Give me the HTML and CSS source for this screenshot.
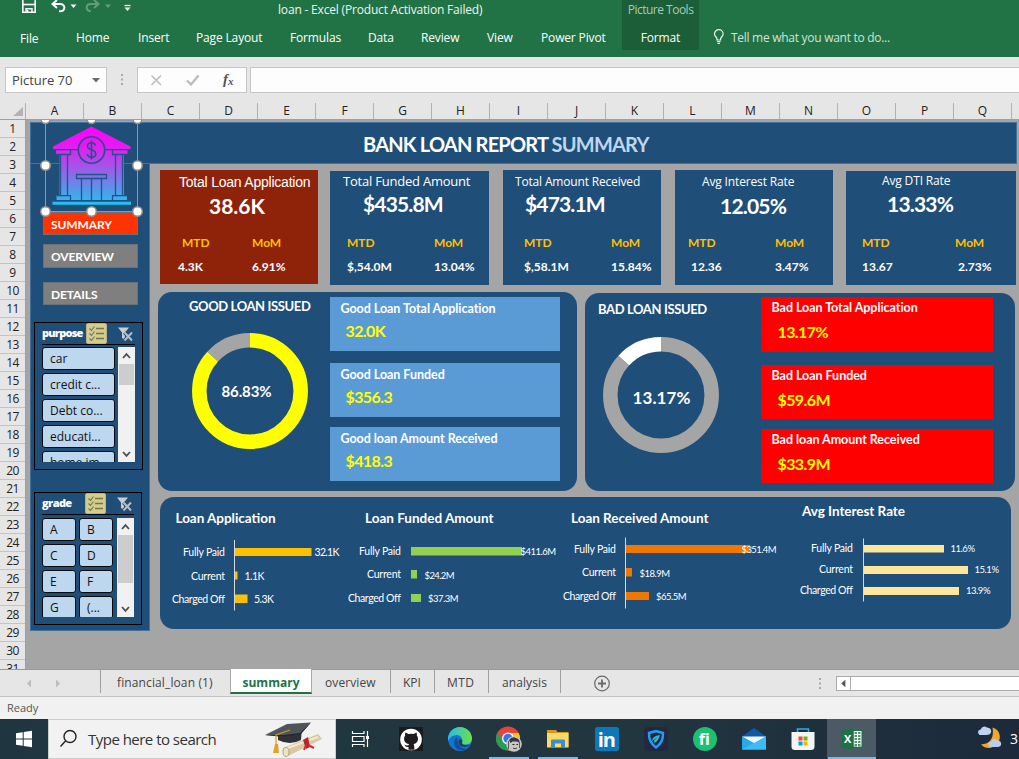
FILE: index.html
```html
<!DOCTYPE html>
<html lang="en">
<head>
<meta charset="utf-8">
<title>loan - Excel</title>
<link rel="stylesheet" href="styles.css">
</head>
<body>
<div class="app">
  <header class="ribbon">
    <div class="title-row">
      <svg class="quick" width="140" height="19" viewBox="0 0 140 19" fill="none" stroke="#fff">
        <path d="M22.8 0V12.2H35.2V0" stroke-width="1.6"/><path d="M23 4.5H35" stroke-width="1.6"/><path d="M26 12.5V8.7H32V12.5" stroke-width="1.4"/><path d="M27.5 10V12.5" stroke-width="1.6"/>
        <path d="M57 0L52.5 4L57 8M53 4H60C66 4 66 11.500 59 11.300" stroke-width="2"/>
        <path d="M70.500 4.500H76.500L73.500 8Z" fill="#fff" stroke="none"/>
        <g opacity=".3"><path d="M94 0L98.500 4L94 8M98 4H91C85.500 4 85 10.500 91 11.300" stroke-width="2"/><path d="M105 4.500H111L108 8Z" fill="#fff" stroke="none"/></g>
        <path d="M124.500 5.500H130.500" stroke-width="1.200"/><path d="M124.500 7.500H130.500L127.500 11Z" fill="#fff" stroke="none"/>
      </svg>
      <span class="doc-title">loan - Excel (Product Activation Failed)</span>
      <span class="tool-title">Picture Tools</span>
    </div>
    <nav class="tabs">
      <span class="t-file">File</span><span class="t-home">Home</span><span class="t-insert">Insert</span><span class="t-page">Page Layout</span><span class="t-form">Formulas</span><span class="t-data">Data</span><span class="t-review">Review</span><span class="t-view">View</span><span class="t-pivot">Power Pivot</span><span class="t-format">Format</span>
      <svg class="bulb" width="12" height="16" viewBox="0 0 12 16" fill="none" stroke="#e6f2ea" stroke-width="1.200"><path d="M4 11V9.500C3.500 8 1.500 7.500 1.500 5A4.300 4.300 0 0 1 10.100 5C10.100 7.500 8 8 7.600 9.500V11ZM4 12.500H7.600M4.500 14.300H7"/></svg>
      <span class="tell">Tell me what you want to do...</span>
    </nav>
  </header>

  <div class="formula-bar">
    <div class="name-box"><span>Picture 70</span><svg width="8" height="5" viewBox="0 0 8 5"><path d="M0 0H8L4 4.500Z" fill="#6b6b6b"/></svg></div>
    <svg class="grip" width="4" height="12" viewBox="0 0 4 12" fill="#a8a8a8"><path d="M1 0h2v2h-2zM1 4.500h2v2h-2zM1 9h2v2h-2z"/></svg>
    <div class="fx-box">
      <svg width="108" height="24" viewBox="0 0 108 24" fill="none"><path d="M13.500 7.500L23 17M23 7.500L13.500 17" stroke="#bdbdbd" stroke-width="1.600"/><path d="M49 12.500L53 16.500L60.500 7.500" stroke="#bdbdbd" stroke-width="2.400"/><text x="85" y="16" class="fx-f">f</text><text x="90" y="17" class="fx-x">x</text></svg>
    </div>
    <div class="formula-input"></div>
  </div>

  <div class="col-heads">
    <div class="corner"><svg width="10" height="9" viewBox="0 0 10 9"><path d="M10 0V9H0Z" fill="#b3b3b3"/></svg></div>
    <span>A</span><span>B</span><span>C</span><span>D</span><span>E</span><span>F</span><span>G</span><span>H</span><span>I</span><span>J</span><span>K</span><span>L</span><span>M</span><span>N</span><span>O</span><span>P</span><span>Q</span><span></span>
  </div>

  <div class="sheet">
    <div class="row-heads"><span>1</span><span>2</span><span>3</span><span>4</span><span>5</span><span>6</span><span>7</span><span>8</span><span>9</span><span>10</span><span>11</span><span>12</span><span>13</span><span>14</span><span>15</span><span>16</span><span>17</span><span>18</span><span>19</span><span>20</span><span>21</span><span>22</span><span>23</span><span>24</span><span>25</span><span>26</span><span>27</span><span>28</span><span>29</span><span>30</span><span>31</span></div>
    <div class="dashboard">
      <div class="banner"><h1>BANK LOAN REPORT <em>SUMMARY</em></h1></div>
      <div class="board">
        <aside class="side">
          <div class="nav"><a class="on">SUMMARY</a><a class="ov">OVERVIEW</a><a class="de">DETAILS</a></div>
          <section class="slicer purpose">
            <div class="slicer-head"><b>purpose</b>
              <svg width="60" height="22" viewBox="0 0 60 22"><rect x=".5" y=".5" width="20" height="20" rx="1.500" fill="#d3cd8b" stroke="#b7b38a"/><path d="M10 5.500H18M10 10.500H18M10 15.500H18" stroke="#77754f" stroke-width="1.500"/><path d="M3.500 5.500L5.500 7.500L8.500 3.500M3.500 10.500L5.500 12.500L8.500 8.500M3.500 15.500L5.500 17.500L8.500 13.500" fill="none" stroke="#6f7360" stroke-width="1.100"/><path d="M32 4.500H43L39 9.500V17L36 15V9.500Z" fill="#c9cdd1"/><path d="M38.500 9.500L46 17.500M46 9.500L38.500 17.500" stroke="#1f4e78" stroke-width="4"/><path d="M38.500 9.500L46 17.500M46 9.500L38.500 17.500" stroke="#b9bdc2" stroke-width="2"/></svg>
            </div>
            <div class="slicer-body">
              <div class="items one"><span>car</span><span>credit c...</span><span>Debt co...</span><span>educati...</span><span>home im...</span></div>
              <div class="scroll"><svg width="17" height="17" viewBox="0 0 17 17"><path d="M5 11L8.500 7.200L12 11" fill="none" stroke="#505050" stroke-width="1.800"/></svg><i class="thumb t1"></i><svg class="down" width="17" height="17" viewBox="0 0 17 17"><path d="M5 7L8.500 10.800L12 7" fill="none" stroke="#505050" stroke-width="1.800"/></svg></div>
            </div>
          </section>
          <section class="slicer grade">
            <div class="slicer-head"><b>grade</b>
              <svg width="60" height="22" viewBox="0 0 60 22"><rect x=".5" y=".5" width="20" height="20" rx="1.500" fill="#d3cd8b" stroke="#b7b38a"/><path d="M10 5.500H18M10 10.500H18M10 15.500H18" stroke="#77754f" stroke-width="1.500"/><path d="M3.500 5.500L5.500 7.500L8.500 3.500M3.500 10.500L5.500 12.500L8.500 8.500M3.500 15.500L5.500 17.500L8.500 13.500" fill="none" stroke="#6f7360" stroke-width="1.100"/><path d="M32 4.500H43L39 9.500V17L36 15V9.500Z" fill="#c9cdd1"/><path d="M38.500 9.500L46 17.500M46 9.500L38.500 17.500" stroke="#1f4e78" stroke-width="4"/><path d="M38.500 9.500L46 17.500M46 9.500L38.500 17.500" stroke="#b9bdc2" stroke-width="2"/></svg>
            </div>
            <div class="slicer-body">
              <div class="items two"><span>A</span><span>B</span><span>C</span><span>D</span><span>E</span><span>F</span><span>G</span><span>(...</span></div>
              <div class="scroll"><svg width="17" height="17" viewBox="0 0 17 17"><path d="M5 11L8.500 7.200L12 11" fill="none" stroke="#505050" stroke-width="1.800"/></svg><i class="thumb t2"></i><svg class="down" width="17" height="17" viewBox="0 0 17 17"><path d="M5 7L8.500 10.800L12 7" fill="none" stroke="#505050" stroke-width="1.800"/></svg></div>
            </div>
          </section>
        </aside>

        <main class="main">
          <div class="kpis">
            <article class="kpi k1"><h2>Total Loan Application</h2><strong>38.6K</strong><dl><dt>MTD</dt><dt>MoM</dt><dd>4.3K</dd><dd>6.91%</dd></dl></article>
            <article class="kpi k2"><h2>Total Funded Amount</h2><strong>$435.8M</strong><dl><dt>MTD</dt><dt>MoM</dt><dd>$,54.0M</dd><dd>13.04%</dd></dl></article>
            <article class="kpi k3"><h2>Total Amount Received</h2><strong>$473.1M</strong><dl><dt>MTD</dt><dt>MoM</dt><dd>$,58.1M</dd><dd>15.84%</dd></dl></article>
            <article class="kpi k4"><h2>Avg Interest Rate</h2><strong>12.05%</strong><dl><dt>MTD</dt><dt>MoM</dt><dd>12.36</dd><dd>3.47%</dd></dl></article>
            <article class="kpi k5"><h2>Avg DTI Rate</h2><strong>13.33%</strong><dl><dt>MTD</dt><dt>MoM</dt><dd>13.67</dd><dd>2.73%</dd></dl></article>
          </div>

          <div class="loans">
            <section class="panel good">
              <div class="ring"><h3>GOOD LOAN ISSUED</h3>
                <svg width="118" height="118" viewBox="-59 -59 118 118"><g fill="none" stroke-width="14.500" transform="rotate(-90)"><circle r="50.700" stroke="#a5a5a5" pathLength="100" stroke-dasharray="0 86.830 13.170 0"/><circle r="50.700" stroke="#ff0" pathLength="100" stroke-dasharray="86.830 100"/></g><text x="-28.500" y="6" textLength="50">86.83%</text></svg>
              </div>
              <div class="stats">
                <div><h4>Good Loan Total Application</h4><b>32.0K</b></div>
                <div><h4>Good Loan Funded</h4><b>$356.3</b></div>
                <div><h4>Good loan Amount Received</h4><b>$418.3</b></div>
              </div>
            </section>
            <section class="panel bad">
              <div class="ring"><h3>BAD LOAN ISSUED</h3>
                <svg width="118" height="118" viewBox="-59 -59 118 118"><g fill="none" stroke-width="14.500" transform="rotate(-90)"><circle r="50.700" stroke="#fff" pathLength="100" stroke-dasharray="0 86.830 13.170 0"/><circle r="50.700" stroke="#a5a5a5" pathLength="100" stroke-dasharray="86.830 100"/></g><text x="-28.500" y="8.500" textLength="58" class="big">13.17%</text></svg>
              </div>
              <div class="stats">
                <div><h4>Bad Loan Total Application</h4><b>13.17%</b></div>
                <div><h4>Bad Loan Funded</h4><b>$59.6M</b></div>
                <div><h4>Bad loan Amount Received</h4><b>$33.9M</b></div>
              </div>
            </section>
          </div>

          <section class="panel charts">
            <svg width="185" height="132" viewBox="160 497 185 132">
              <text class="ct" x="175.500" y="523" textLength="100">Loan Application</text>
              <g class="cl"><text x="183" y="555.500" textLength="42">Fully Paid</text><text x="191" y="579.500" textLength="34">Current</text><text x="172" y="602.500" textLength="53">Charged Off</text></g>
              <g fill="#ffc000"><path d="M235 548h76.500v8h-76.500zM235 571.500h2.500v8h-2.500zM235 594.500h12.500v8.500h-12.500z"/></g>
              <path d="M234.500 540V610.500" stroke="#d9d9d9"/>
              <g class="cl"><text x="314.500" y="556" textLength="25">32.1K</text><text x="244.500" y="579.500" textLength="20">1.1K</text><text x="254" y="602.500" textLength="20">5.3K</text></g>
            </svg>
            <svg width="213" height="132" viewBox="345 497 213 132">
              <text class="ct" x="365" y="523" textLength="128.500">Loan Funded Amount</text>
              <g class="cl"><text x="359" y="554.500" textLength="42">Fully Paid</text><text x="367" y="577.500" textLength="34">Current</text><text x="348" y="601.500" textLength="53">Charged Off</text></g>
              <path fill="#92d050" d="M411 547h111v8.500h-111zM411 570h6v8.500h-6zM411 594h10v8h-10z"/>
              <g class="cv"><text x="520.500" y="554.500" textLength="35.500">$411.6M</text><text x="424.500" y="578.500" textLength="30">$24.2M</text><text x="428" y="601.500" textLength="30.500">$37.3M</text></g>
            </svg>
            <svg width="232" height="132" viewBox="558 497 232 132">
              <text class="ct" x="571" y="523" textLength="137.500">Loan Received Amount</text>
              <g class="cl"><text x="574" y="552.500" textLength="42">Fully Paid</text><text x="582" y="575.500" textLength="34">Current</text><text x="563" y="599.500" textLength="53">Charged Off</text></g>
              <path fill="#f07800" d="M626 545h124v8h-124zM626 568h6v8.500h-6zM626 592h23v8h-23z"/>
              <path d="M625.500 537.500V608.500" stroke="#d9d9d9"/>
              <g class="cv"><text x="741.500" y="552.500" textLength="35">$351.4M</text><text x="639.500" y="576.500" textLength="30.500">$18.9M</text><text x="656" y="599.500" textLength="30.500">$65.5M</text></g>
            </svg>
            <svg width="221" height="132" viewBox="790 497 221 132">
              <text class="ct" x="802" y="516" textLength="103">Avg Interest Rate</text>
              <g class="cl"><text x="811" y="552" textLength="42">Fully Paid</text><text x="819" y="573" textLength="34">Current</text><text x="800" y="594" textLength="53">Charged Off</text></g>
              <path fill="#ffe699" d="M864 545h80v7.500h-80zM864 566h104v8h-104zM864 587h95v8h-95z"/>
              <path d="M863.500 538.500V601.500" stroke="#d9d9d9"/>
              <g class="cv"><text x="950.500" y="552" textLength="24.500">11.6%</text><text x="974.500" y="573" textLength="24.500">15.1%</text><text x="966" y="594" textLength="24.500">13.9%</text></g>
            </svg>
          </section>
        </main>
      </div>
      <svg class="picture" width="106" height="99" viewBox="38 120 106 99">
        <defs><linearGradient id="bank" gradientUnits="userSpaceOnUse" x1="0" y1="126" x2="0" y2="205"><stop offset="0" stop-color="#ff00ff"/><stop offset=".25" stop-color="#e61bf0"/><stop offset=".6" stop-color="#8d68e6"/><stop offset="1" stop-color="#22c3ee"/></linearGradient></defs>
        <g fill="url(#bank)"><path d="M91.500 126.500L53 146.500V149H130.500V146.500Z"/><path d="M56 149H127.500V154H124V195.500H127V200H56.500V195.500H59.500V154H56Z"/><path d="M52.500 201.500H131V204.800H52.500Z"/></g>
        <g fill="none" stroke="#23518c" stroke-width="1.300"><path d="M54 149.600H79M104 149.600H130M56 154.500H70.500V150M127.500 154.500H112.500V150M60.500 154.500V195.500M67.500 154.500V195.500M122.500 154.500V195.500M115.500 154.500V195.500M57 195.700H70.500V200.500M127 195.700H112.500V200.500M53 200.800H130M76.500 174.500H106.500V178.500H76.500ZM81.500 178.500V200M91.500 178.500V200M101.500 178.500V200"/></g>
        <circle cx="91.500" cy="150" r="13.200" fill="url(#bank)" stroke="#23518c" stroke-width="1.600"/>
        <path d="M95.500 145.500C94.500 141.500 87.500 142 87.500 146C87.500 151 95.800 148.500 95.800 154C95.800 158 88 158.500 87.300 154M91.500 140.500V159.500" fill="none" stroke="#23518c" stroke-width="1.600"/>
        <rect x="45.500" y="120.500" width="92" height="91" fill="none" stroke="#8c9aa8"/>
        <g fill="#fff" stroke="#8c8c8c" stroke-width="1.500"><circle cx="45.500" cy="119" r="4.500"/><circle cx="91.500" cy="119" r="4.500"/><circle cx="137.500" cy="119" r="4.500"/><circle cx="45.500" cy="165.500" r="4.800"/><circle cx="137.500" cy="165.500" r="4.800"/><circle cx="45.500" cy="211.500" r="4.800"/><circle cx="91.500" cy="211.500" r="4.800"/><circle cx="137.500" cy="211.500" r="4.800"/></g>
      </svg>
    </div>
  </div>

  <div class="sheet-tabs">
    <svg class="arrows" width="100" height="27" viewBox="0 0 100 27" fill="#bdbdbd"><path d="M31 9.500V17.500L27 13.500ZM56 9.500V17.500L60 13.500Z"/></svg>
    <span class="s1">financial_loan (1)</span><span class="s2">summary</span><span class="s3">overview</span><span class="s4">KPI</span><span class="s5">MTD</span><span class="s6">analysis</span>
    <svg class="add" width="18" height="27" viewBox="0 0 18 27" fill="none" stroke="#6a6a6a"><circle cx="9" cy="13.500" r="7.300" stroke-width="1.200"/><path d="M5 13.500H13M9 9.500V17.500" stroke-width="1.800"/></svg>
    <svg class="grip2" width="4" height="12" viewBox="0 0 4 12" fill="#a8a8a8"><path d="M1 0h2v2h-2zM1 4.500h2v2h-2zM1 9h2v2h-2z"/></svg>
    <div class="hscroll"><svg width="14" height="13" viewBox="0 0 14 13"><path d="M9 2.500V10.500L4.500 6.500Z" fill="#555"/></svg></div>
  </div>
  <div class="status">Ready</div>

  <footer class="taskbar">
    <svg class="start" width="48" height="40" viewBox="0 0 48 40" fill="#fff"><path d="M16 14.200L22.700 13.200V19.500H16ZM23.700 13L32 11.800V19.500H23.700ZM16 20.500H22.700V26.800L16 25.800ZM23.700 20.500H32V28.200L23.700 27Z"/></svg>
    <div class="search">
      <svg width="39" height="38" viewBox="0 0 39 38" fill="none" stroke="#222" stroke-width="1.400"><circle cx="21" cy="16.500" r="6"/><path d="M16.500 21L11.500 26.500"/></svg>
      <span>Type here to search</span>
      <svg class="cap" width="62" height="38" viewBox="262 720 62 38"><path d="M278 730L302 727L301 740Q290 746 278 740Z" fill="#2e3136"/><path d="M265 735L287 724L311 722.500L300 735L285 737Z" fill="#50545b"/><path d="M265 735L285 737L300 735L311 722.500L300 733L284 735Z" fill="#25282c"/><path d="M290 730L276 735V749" fill="none" stroke="#d79b18" stroke-width="1.200"/><path d="M275 744L278 744L279 753H273Z" fill="#dfa422"/><path d="M283 748L318 734L322 739L288 756Q281 754 283 748Z" fill="#d9c8a3"/><path d="M285 749L318 737" stroke="#f5e9cb" stroke-width="2"/><ellipse cx="286" cy="752" rx="3" ry="4.500" fill="#efe3c4" stroke="#a18c64" stroke-width=".7"/><path d="M303 740L308 737L310 747L306 749Z" fill="#b9232b"/><path d="M306 745L304 750M308 745L314 748" stroke="#d02b35" stroke-width="2"/></svg>
    </div>
    <svg class="task-view" width="50" height="40" viewBox="0 0 50 40" fill="none" stroke="#fff" stroke-width="1.200"><path d="M16.500 12V14.500H28V12M16.500 28V25.500H28V28M16.500 17.500H28V22.500H16.500ZM31.500 12V28"/><path d="M30 17H33V20H30Z" fill="#fff" stroke="none"/></svg>
    <div class="app-btn"><svg width="24" height="24" viewBox="0 0 24 24"><path d="M0 0H24V24H0Z" fill="#1d1b1c"/><circle cx="12" cy="12.500" r="10.800" fill="#fff"/><path d="M6.500 5.500L9.500 7Q12 6.300 14.500 7L17.500 5.500Q18.300 7 17.800 8.500C20.500 12 18.500 16.500 14.500 17Q15.500 18 15.300 22.800H9.500V20Q6.500 20.500 5.300 17.500Q7.500 18.700 9.500 18.300L10 17C5.500 16.500 3.700 12 6.200 8.500Q5.700 7 6.500 5.500Z" fill="#1d1b1c"/></svg></div>
    <div class="app-btn"><svg width="24" height="24" viewBox="0 0 24 24"><defs><linearGradient id="e1" x1="0" x2="1"><stop stop-color="#28b9ee"/><stop offset="1" stop-color="#6ae344"/></linearGradient></defs><circle cx="12" cy="12" r="12" fill="#1673ce"/><path d="M0 12A12 12 0 0 1 24 12Q23.500 17.500 17 17.500Q13.500 17 14 15C15 12 13 8 9 8Q2.500 8 0 14Z" fill="url(#e1)"/><path d="M9 10Q3.500 15.500 8.500 21.500Q13 24.800 18.500 22Q10 22 9 10Z" fill="#0d4e9e"/><path d="M11.500 12Q9.500 14.500 12 18.500Q16.500 21.500 22.500 18Q17 18.500 14.500 17.500Q13.300 16.500 14.500 14Q13.500 12 11.500 12Z" fill="#23404d"/></svg></div>
    <div class="app-btn run"><svg width="28" height="26" viewBox="0 0 28 26"><circle cx="13" cy="12.500" r="12" fill="#ea4335"/><path d="M2.600 6.500A12 12 0 0 0 12 24.500L16.500 16L7.500 14Z" fill="#22a155"/><path d="M13 7H23.700A12 12 0 0 1 13 24.500L18 15Z" fill="#fbc116"/><circle cx="13" cy="12.500" r="6" fill="#fff"/><circle cx="13" cy="12.500" r="4.700" fill="#3478e5"/><circle cx="19" cy="18" r="7.800" fill="#c8c7c3"/><path d="M14 14Q17 10 21 12Q25 13 24.500 17L22 15.500L17.500 15.500L15.500 17Z" fill="#36393b"/><path d="M13.500 15V23M24.500 16V22" stroke="#55585a"/><path d="M17.500 18.500H19.500M21.500 18.500H23" stroke="#222"/><path d="M18 22Q20 23.500 22 22" fill="none" stroke="#444"/></svg></div>
    <div class="app-btn run"><svg width="24" height="22" viewBox="0 0 24 22"><path d="M1 2H10L11.500 4H22.500V19H1Z" fill="#d79b18"/><path d="M1 5H22.500V19.500H1Z" fill="#ffd867"/><path d="M5 12.500Q5 11.500 6 11.500H18Q19 11.500 19 12.500V20H15V15.500H9V20H5Z" fill="#3a8fc9"/></svg></div>
    <div class="app-btn"><svg width="24" height="24" viewBox="0 0 24 24"><rect width="24" height="24" rx="2.500" fill="#0a78b9"/><text x="2.800" y="19.500" class="li" textLength="18">in</text></svg></div>
    <div class="app-btn"><svg width="24" height="24" viewBox="0 0 24 24"><rect width="24" height="24" rx="4" fill="#202942"/><path d="M5 6L12 4L19 6Q19.500 15 12 20.500Q4.500 15 5 6Z" fill="none" stroke="#259cf3" stroke-width="2.400"/><path d="M8 14Q8 9 16 8Q14.500 14 10.500 16L10 13.500L14 10" fill="#27bdd8"/></svg></div>
    <div class="app-btn"><svg width="24" height="24" viewBox="0 0 24 24"><circle cx="12" cy="12" r="12" fill="#1dbf73"/><text x="5.800" y="18" class="fi" textLength="12">fi</text></svg></div>
    <div class="app-btn"><svg width="24" height="24" viewBox="0 0 24 24"><path d="M0 9.500L12 1L24 9.500V22.500H0Z" fill="#0f5aa8"/><path d="M0 9.500H24L12 17Z" fill="#f3f8fc"/><path d="M0 9.500L24 22.500H0Z" fill="#28a9ea"/><path d="M24 9.500V22.500L0 22.500Z" fill="#39bdf4"/></svg></div>
    <div class="app-btn"><svg width="24" height="24" viewBox="0 0 24 24"><path d="M6.500 6V2H17.500V6" fill="none" stroke="#2eabe5" stroke-width="1.600"/><path d="M.5 5H23.500V19.500Q23.500 23 20 23H4Q.5 23 .5 19.500Z" fill="#f4f4f4"/><path d="M7.500 9.500H11.500V13.500H7.500Z" fill="#ef4e23"/><path d="M12.500 9.500H16.500V13.500H12.500Z" fill="#78b500"/><path d="M7.500 14.500H11.500V18.500H7.500Z" fill="#00a1ec"/><path d="M12.500 14.500H16.500V18.500H12.500Z" fill="#f8b200"/></svg></div>
    <div class="app-btn run active"><svg width="22" height="22" viewBox="0 0 22 22"><path d="M12 2.500H21V19H12Z" fill="#fff" stroke="#1b7044"/><path d="M13.500 5H19.500M13.500 8H19.500M13.500 11H19.500M13.500 14H19.500M13.500 17H19.500" stroke="#1b7044" stroke-width="1.300"/><path d="M16.500 3V19" stroke="#fff"/><path d="M0 2.500L12.500 0V22L0 19.500Z" fill="#1d7145"/><text x="3" y="15" class="xl">X</text></svg></div>
    <svg class="weather" width="26" height="24" viewBox="0 0 26 24"><path d="M15.500 1.500C27 5 24 20.500 13 22Q7.500 22.300 4 18.500Q18 17.500 15.500 1.500Z" fill="#f4a62a"/><path d="M2.500 9Q-1 5 3.500 3.500Q6 -1 10 1.500Q15 2 14 6.500Q13 9 9 9Z" fill="#c2d2f2"/><path d="M13 21Q9 17 14 15.500Q16 11 20 14Q25 15 24 19Q23 21.500 18 21Z" fill="#b9cbee"/></svg>
    <span class="temp">3</span>
  </footer>
</div>
</body>
</html>
```
FILE: styles.css
```css
*{box-sizing:border-box;margin:0;padding:0}
body{width:1019px;height:759px;overflow:hidden;font-family:"Open Sans","Noto Sans",sans-serif;font-size:12px;background:#e6e6e6}
svg{display:block;flex:none}
.app{width:1019px;height:759px;display:flex;flex-direction:column;overflow:hidden}
.app>*{flex:none}
span,h1,h2,h3,h4,dt,dd,strong,b{white-space:nowrap}

.ribbon{height:57px;background:#217346;color:#fff}
.title-row{height:19px;display:flex}
.doc-title{width:344px;margin-left:138px;letter-spacing:-.18px;line-height:19px;color:#eef6f1}
.tool-title{width:77px;height:19px;background:#1b5e38;color:#a8cdb6;text-align:center;line-height:19px;letter-spacing:-.5px;font-size:12px}
.tabs{height:38px;display:flex;align-items:flex-start;line-height:38px;letter-spacing:-.15px}
.tabs span{flex:none}
.t-file{width:56px;padding-left:20px;line-height:40px}
.tabs .t-home{width:62px;margin-left:20px}
.t-insert{width:58px}
.t-page{width:94px}
.t-form{width:78px}
.t-data{width:53px}
.t-review{width:66px}
.t-view{width:54px}
.t-pivot{width:81px}
.t-format{width:77px;height:31px;background:#1b5e38;text-align:center}
.bulb{margin:10px 6px 0 14px}
.tabs .tell{color:#cfe3d7;letter-spacing:-.28px}

.formula-bar{height:46px;padding-top:10px;display:flex;background:#e6e6e6}
.name-box,.fx-box,.formula-input{height:26px;background:#fdfdfd;border:1px solid #c6c6c6}
.name-box{width:102px;margin-left:5px;padding:0 6px;display:flex;align-items:center;justify-content:space-between;font-size:13px;letter-spacing:-.05px;color:#444}
.grip{margin:7px 13px 0 13px}
.fx-box{width:110px}
.fx-f,.fx-x{font-family:"Liberation Serif",serif;font-style:italic;font-weight:bold;fill:#555;font-size:15px}
.fx-x{font-size:11px}
.formula-input{flex:1;margin-left:3px;border-right:0}

.col-heads{height:17px;display:flex;border-bottom:1px solid #9f9f9f;overflow:hidden}
.corner{flex:none;width:26px;height:17px;padding:4px 0 0 13px;border-right:1px solid #b1b1b1}
.col-heads span{flex:none;width:58px;text-align:center;line-height:16px;color:#222;border-right:1px solid #b1b1b1}

.sheet{height:549px;display:flex;background:#a5a5a5;overflow:hidden}
.row-heads{flex:none;width:26px;background:#e6e6e6;border-right:1px solid #9f9f9f;display:flex;flex-direction:column}
.row-heads span{flex:none;height:18px;line-height:18px;text-align:center;color:#222;border-bottom:1px solid #c4c4c4;letter-spacing:-.5px}
.dashboard{position:relative;width:993px;padding:2px 2px 0 4px;overflow:hidden}
.banner{height:42px;background:#1f4e78;border:1px solid #41719c;color:#fff}
.banner h1{font:bold 20px/43px Lato,sans-serif;margin-left:332px;letter-spacing:-.8px}
.banner em{font-style:normal;color:#bdd7ee}
.board{display:flex}
.side{width:120px;height:468px;margin-top:-1px;background:#1f4e78;border:1px solid #41719c;padding:48px 3px 0}
.nav{padding-left:9px;font:bold 12px Lato,sans-serif;color:#fff;height:110px;letter-spacing:-.1px}
.nav a{display:block;width:95px;border:1px solid #67717c;background:#7f7f7f;padding-left:7px}
.nav a.on{height:23px;background:#ff3300;line-height:24px}
.nav a.ov{height:24px;margin-top:9px;line-height:24px}
.nav a.de{height:23px;margin-top:14px;line-height:24px}
.slicer{border:1px solid #000;padding:0 7px}
.purpose{width:109px;height:148px}
.grade{width:108px;height:133px;margin-top:22px}
.slicer-head{height:22px;display:flex;justify-content:space-between;border-bottom:1px solid #000;color:#fff;font:bold 11px/20px "Open Sans",sans-serif;letter-spacing:-.8px}
.grade .slicer-head{letter-spacing:-.6px}
.slicer-head svg{margin-right:-11px}
.slicer-body{display:flex;justify-content:space-between;margin-top:2px;overflow:hidden}
.purpose .slicer-body{height:115px}
.grade .slicer-body{height:99px;margin-top:3px}
.items{display:grid;gap:3px 4px;align-content:start}
.items span{height:23px;border:1px solid #0a0a0a;border-radius:3px;background:#bdd7ee;padding-left:7px;line-height:22px;color:#111}
.one{grid-template-columns:73px}
.two{grid-template-columns:34px 34px}
.two{margin-right:-1px;column-gap:3px}
.scroll{width:17px;background:#f1f1f1;display:flex;flex-direction:column}
.thumb{width:15px;margin-left:1px;background:#cdcdcd}
.t1{height:21px}
.t2{height:48px}
.down{margin-top:auto}
.picture{position:absolute;left:12px;top:0}

.main{color:#fff;font-family:Lato,sans-serif;padding:6px 0 0 8px}
.kpis{display:flex;padding-left:2px;height:122px}
.kpi{height:115px;background:#1f4e78;width:158px;padding-top:2px}
.kpi h2{font:13px/20px "Open Sans",sans-serif;height:20px}
.kpi strong{display:block;font-size:21px;line-height:28px;height:39px}
.kpi dl{display:grid;grid-template-columns:87px auto;justify-content:start;grid-auto-rows:24px;font-weight:bold;line-height:24px;font-size:12px}
.kpi dt{color:#ffc000;font-size:12px}
.k1{height:114px;background:#8e230a}
.k1 h2{font-family:"Liberation Sans",sans-serif;font-size:14px;margin-left:19px;letter-spacing:-.22px}
.k1 strong{margin-left:49px}
.k1 dl{margin-left:18px;grid-template-columns:74px auto}
.k1 dt:first-child{padding-left:4px}
.k2{margin:1px 0 0 12px;width:159px;padding-top:0;height:114px}
.k2 h2{margin-left:13px;letter-spacing:-.22px}
.kpi.k2 strong,.kpi.k3 strong{letter-spacing:-.85px}
.k2 strong{margin:-1px 0 2px 33px}
.k2 dl{margin-left:17px}
.k3{margin-left:14px}
.k3 h2{margin-left:12px;font-size:12px;letter-spacing:-.17px}
.k3 strong{margin:-2px 0 2px 22px}
.k3 dl{margin-left:21px}
.k4{margin-left:14px}
.k4 h2{margin-left:27px;font-size:12px;letter-spacing:-.15px}
.k4 strong{margin-left:45px;letter-spacing:-.8px}
.k4 dl{margin-left:13px}
.k4 dd:nth-child(3){padding-left:3px}
.k5{margin:1px 0 0 13px;width:170px;padding-top:0;height:114px}
.k5 h2{margin-left:36px;font-size:12px;letter-spacing:-.15px}
.k5 strong{margin:-1px 0 2px 41px;letter-spacing:-.8px}
.k5 dl{margin-left:16px;grid-template-columns:93px auto}
.k5 dd:last-child{padding-left:3px}

.loans{display:flex;gap:8px;height:205px}
.panel{background:#1f4e78;border-radius:14px}
.good{width:419px;height:199px;display:flex}
.bad{width:430px;height:198px;margin-top:1px;display:flex}
.ring h3{font-size:13px;line-height:18px;letter-spacing:-.38px}
.ring text{font:bold 15px Lato,sans-serif;fill:#fff}
.ring .big{font-size:17px}
.good .ring{width:172px;padding:5px 0 0 33px}
.good .ring h3{margin-left:-2px}
.good .ring svg{margin-top:17px}
.bad .ring{width:176px;padding:7px 0 0 17px}
.bad .ring h3{margin-left:-4px}
.bad .ring svg{margin-top:18px}
.stats{font-size:13px}
.stats h4{font-size:12.500px;line-height:20px;padding:2px 0 0 10.500px;letter-spacing:-.04px}
.stats b{display:block;font-size:16px;line-height:22px;color:#ff0;padding:1px 0 0 15.500px;letter-spacing:-.6px}
.good .stats div{width:230px;height:54px;background:#5b9bd5;margin-top:10px}
.good .stats div:first-child{margin:5px 0 12px}
.bad .stats div{width:232px;height:54px;background:#f00;margin-top:10px}
.bad .stats div:first-child{margin:4px 0 13px;height:55px}
.bad .stats h4{padding-top:1px}
.bad .stats b{padding:3px 0 0 16.500px}
.charts{width:851px;height:132px;margin-left:2px;display:flex}
.ct{font:bold 13.500px Lato,sans-serif;fill:#fff}
.cl{font:10.500px Lato,sans-serif;fill:#fff}
.cv{font:9.500px Lato,sans-serif;fill:#fff}

.sheet-tabs{height:28px;border-top:1px solid #9a9a9a;border-bottom:1px solid #c3c3c3;display:flex;line-height:26px;font-size:12px;color:#444}
.sheet-tabs span{flex:none}
.s1{width:130px;padding-left:16px;border-left:1px solid #a0a0a0;height:23px;letter-spacing:.12px}
.s2{width:82px;height:25px;margin-top:-1px;background:#fff;border:1px solid #aaa;border-top:0;border-bottom:2px solid #217346;text-align:center;font-weight:bold;color:#217346;line-height:28px}
.s3{width:79px;padding-left:13px;letter-spacing:.1px}
.s3,.s4,.s5,.s6{height:23px;border-right:1px solid #a0a0a0}
.s4{width:44px;padding-left:12px}
.s5{width:54px;padding-left:12px;letter-spacing:.4px}
.s6{width:72px;padding-left:13px;letter-spacing:.1px}
.add{margin-left:32px}
.grip2{margin:8px 14px 0 207px}
.hscroll{flex:1;height:15px;margin-top:6px;background:#fff;border:1px solid #ababab;border-right:0}
.hscroll svg{border-right:1px solid #ababab}
.status{height:22px;background:#f1f1f1;color:#555;font-size:11px;line-height:22px;padding-left:7px}

.taskbar{height:40px;display:flex;background:linear-gradient(90deg,#1f3640,#22363f 60%,#1c2a3b)}
.search{width:288px;height:40px;background:#f2f2f2;border:1px solid #ccc;display:flex;align-items:center;font-size:15px;letter-spacing:-.52px;color:#333}
.cap{margin-left:auto;margin-right:11px}
.app-btn{width:49px;height:40px;display:flex;align-items:center;justify-content:center}
.run{background:linear-gradient(#76b9ed,#76b9ed) center bottom/40px 2px no-repeat}
.active{background:linear-gradient(#76b9ed,#76b9ed) center bottom/48px 2px no-repeat,#4b5a64}
.li{font:bold 20px "Open Sans",sans-serif;fill:#fff}
.fi{font:bold 16px "Open Sans",sans-serif;fill:#fff}
.xl{font:bold 11px "Open Sans",sans-serif;fill:#fff}
.weather{margin:7px 0 0 101px}
.temp{color:#fff;font-size:14px;line-height:40px;margin-left:7px}
```
